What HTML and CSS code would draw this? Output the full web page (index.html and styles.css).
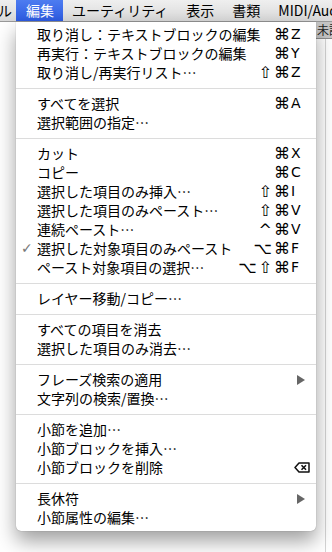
FILE: index.html
```html
<!DOCTYPE html>
<html>
<head>
  <title>編集メニュー</title>
  <link rel="stylesheet" href="styles.css">
</head>
<body>
  <div class="menubar">
    <span class="mb-item cut">ル</span>
    <span class="mb-item active">編集</span>
    <span class="mb-item">ユーティリティ</span>
    <span class="mb-item">表示</span>
    <span class="mb-item">書類</span>
    <span class="mb-item">MIDI/Audio</span>
  </div>

  <div class="window">
    <div class="toolbar"><span>未記入</span></div>
    <div class="canvas"></div>
  </div>

  <!-- the open Edit menu -->
  <div class="menu">
    <div class="item"><span class="mark"></span><span class="label">取り消し：テキストブロックの編集</span><span class="keys"><span class="mod">⌘</span><span class="key">Z</span></span></div>
    <div class="item"><span class="mark"></span><span class="label">再実行：テキストブロックの編集</span><span class="keys"><span class="mod">⌘</span><span class="key">Y</span></span></div>
    <div class="item"><span class="mark"></span><span class="label">取り消し/再実行リスト…</span><span class="keys"><span class="mod">⇧</span><span class="mod">⌘</span><span class="key">Z</span></span></div>
    <div class="sep"></div>
    <div class="item"><span class="mark"></span><span class="label">すべてを選択</span><span class="keys"><span class="mod">⌘</span><span class="key">A</span></span></div>
    <div class="item"><span class="mark"></span><span class="label">選択範囲の指定…</span></div>
    <div class="sep"></div>
    <div class="item"><span class="mark"></span><span class="label">カット</span><span class="keys"><span class="mod">⌘</span><span class="key">X</span></span></div>
    <div class="item"><span class="mark"></span><span class="label">コピー</span><span class="keys"><span class="mod">⌘</span><span class="key">C</span></span></div>
    <div class="item"><span class="mark"></span><span class="label">選択した項目のみ挿入…</span><span class="keys"><span class="mod">⇧</span><span class="mod">⌘</span><span class="key">I</span></span></div>
    <div class="item"><span class="mark"></span><span class="label">選択した項目のみペースト…</span><span class="keys"><span class="mod">⇧</span><span class="mod">⌘</span><span class="key">V</span></span></div>
    <div class="item"><span class="mark"></span><span class="label">連続ペースト…</span><span class="keys"><span class="mod">^</span><span class="mod">⌘</span><span class="key">V</span></span></div>
    <div class="item"><span class="mark">✓</span><span class="label">選択した対象項目のみペースト</span><span class="keys"><span class="mod">⌥</span><span class="mod">⌘</span><span class="key">F</span></span></div>
    <div class="item"><span class="mark"></span><span class="label">ペースト対象項目の選択…</span><span class="keys"><span class="mod">⌥</span><span class="mod">⇧</span><span class="mod">⌘</span><span class="key">F</span></span></div>
    <div class="sep"></div>
    <div class="item"><span class="mark"></span><span class="label">レイヤー移動/コピー…</span></div>
    <div class="sep"></div>
    <div class="item"><span class="mark"></span><span class="label">すべての項目を消去</span></div>
    <div class="item"><span class="mark"></span><span class="label">選択した項目のみ消去…</span></div>
    <div class="sep"></div>
    <div class="item"><span class="mark"></span><span class="label">フレーズ検索の適用</span><svg class="arrow" width="9" height="10" viewBox="0 0 9 10"><polygon points="0,0 8,5 0,10" fill="#666"/></svg></div>
    <div class="item"><span class="mark"></span><span class="label">文字列の検索/置換…</span></div>
    <div class="sep"></div>
    <div class="item"><span class="mark"></span><span class="label">小節を追加…</span></div>
    <div class="item"><span class="mark"></span><span class="label">小節ブロックを挿入…</span></div>
    <div class="item"><span class="mark"></span><span class="label">小節ブロックを削除</span><svg class="bksp" width="16" height="11" viewBox="0 0 16 11"><path d="M5 1 H15 V10 H5 L1 5.5 Z" fill="none" stroke="#111" stroke-width="1.5" stroke-linejoin="round"/><path d="M7.5 3.3 L12 7.7 M12 3.3 L7.5 7.7" stroke="#111" stroke-width="1.6"/></svg></div>
    <div class="sep"></div>
    <div class="item"><span class="mark"></span><span class="label">長休符</span><svg class="arrow" width="9" height="10" viewBox="0 0 9 10"><polygon points="0,0 8,5 0,10" fill="#666"/></svg></div>
    <div class="item"><span class="mark"></span><span class="label">小節属性の編集…</span></div>
  </div>
</body>
</html>
```

FILE: styles.css
```css
body {
  margin: 0;
  width: 332px;
  height: 552px;
  overflow: hidden;
  background-color: #fff;
  font-family: "Noto Sans CJK JP", sans-serif;
  color: #000;
}
/* top menu bar */
.menubar {
  display: flex;
  height: 21px;
  border-bottom: 1px solid #9a9a9a;
  background: linear-gradient(#efefef, #d9d9d9);
  font-size: 14px;
  line-height: 21px;
  white-space: nowrap;
  overflow: hidden;
}
.mb-item {
  padding: 0 9px;
  flex: none;
}
.mb-item.cut {
  margin-left: -2px;
  padding: 0 4px 0 0;
}
.mb-item.active {
  padding: 0 9px 0 10px;
  color: #fff;
  background: linear-gradient(#4d7cf0, #2d5be2);
}
/* window behind the menu */
.toolbar {
  height: 16px;
  margin-left: 300px;
  padding-left: 17px;
  background-color: #c6c6c6;
  border-bottom: 1px solid #8c8c8c;
  font-size: 12px;
  line-height: 16px;
  color: #222;
  white-space: nowrap;
  overflow: hidden;
}
.canvas {
  height: 520px;
  margin-left: 325px;
  border-left: 1px solid #d4d4d4;
}
/* dropdown menu */
.menu {
  position: absolute;
  left: 16px;
  top: 22px;
  width: 300px;
  padding: 3px 0 4px;
  background-color: #fff;
  border-radius: 0 0 5px 5px;
  box-shadow: 0 10px 20px rgba(0, 0, 0, 0.38), 0 0 1px rgba(0, 0, 0, 0.45);
}
.item {
  display: flex;
  align-items: center;
  height: 19px;
  padding-right: 12px;
  font-size: 14px;
  line-height: 19px;
  white-space: nowrap;
}
.mark {
  width: 21px;
  flex: none;
  padding-left: 5px;
  box-sizing: border-box;
  font-family: "DejaVu Sans", sans-serif;
  font-size: 14px;
  color: #777;
}
.label {
  flex: 1;
}
.keys {
  display: flex;
  align-items: center;
  font-family: "DejaVu Sans", sans-serif;
  font-size: 14px;
}
.mod {
  margin-left: 2px;
  font-size: 16px;
}
.key {
  width: 13px;
  padding-left: 1px;
}
.arrow {
  margin-right: -2px;
}
.bksp {
  margin-right: -6px;
}
.sep {
  height: 1px;
  margin: 6px 0 5px;
  background-color: #dcdcdc;
}
```
